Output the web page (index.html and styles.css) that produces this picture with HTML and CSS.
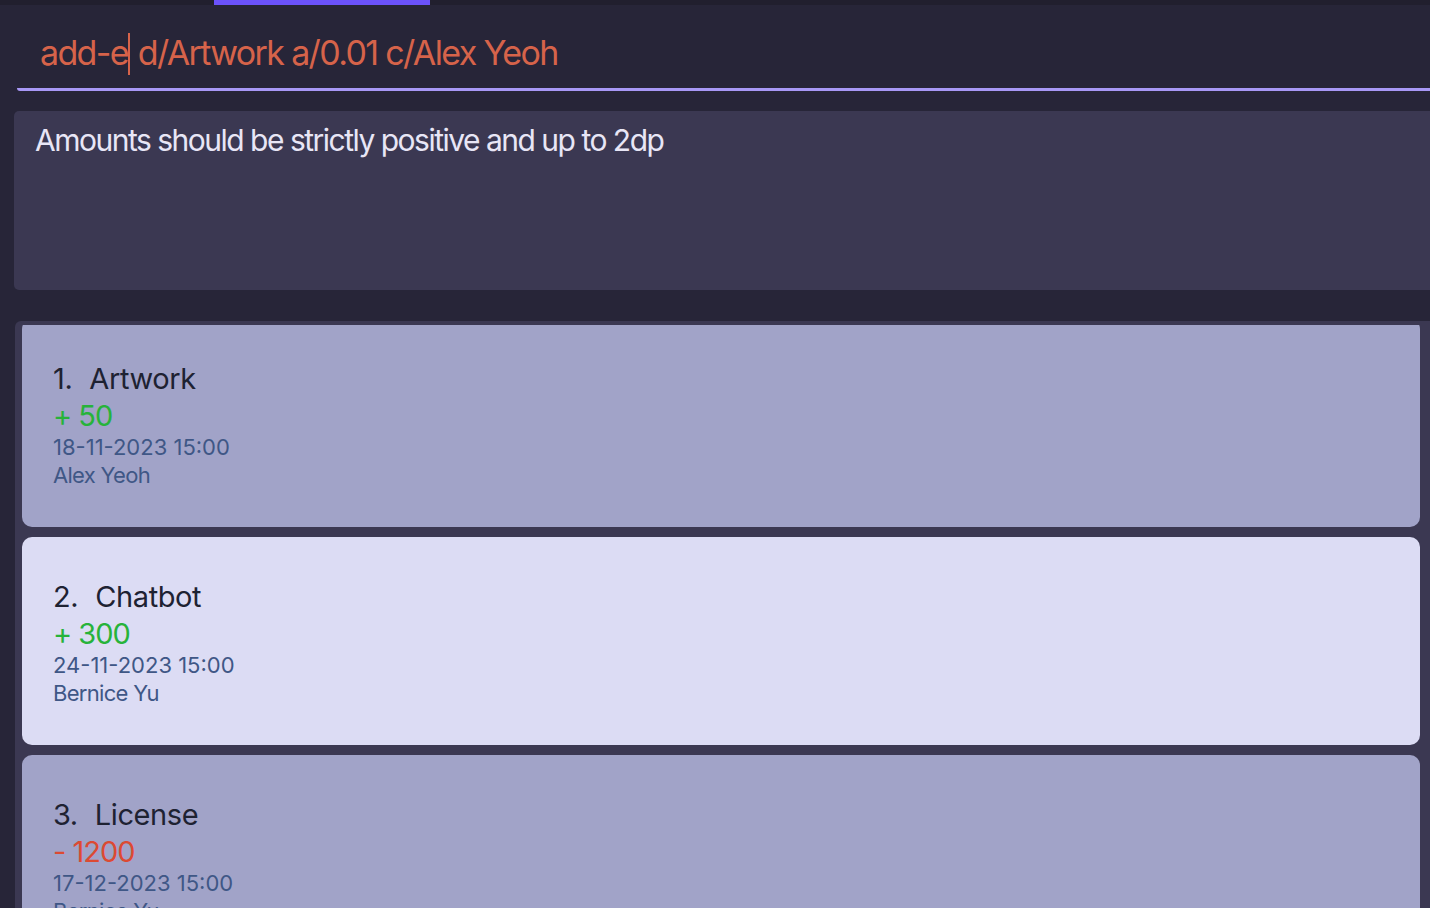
FILE: index.html
```html
<!DOCTYPE html>
<html lang="en">
<head>
<meta charset="utf-8">
<title>Finance</title>
<link rel="stylesheet" href="styles.css">
</head>
<body>
<div class="tabbar"><div class="tab-active"></div></div>
<div class="command">
  <div class="command-text">add-e<span class="caret"></span> d/Artwork a/0.01 c/Alex Yeoh</div>
</div>
<div class="result">Amounts should be strictly positive and up to 2dp</div>
<div class="list-panel">
  <div class="list-viewport">
    <div class="list-inner">
      <div class="card odd">
        <div class="title"><span class="idx">1.</span><span>Artwork</span></div>
        <div class="amount pos">+ 50</div>
        <div class="meta">18-11-2023 15:00</div>
        <div class="meta name">Alex Yeoh</div>
      </div>
      <div class="card even">
        <div class="title"><span class="idx">2.</span><span>Chatbot</span></div>
        <div class="amount pos">+ 300</div>
        <div class="meta">24-11-2023 15:00</div>
        <div class="meta name">Bernice Yu</div>
      </div>
      <div class="card odd">
        <div class="title"><span class="idx">3.</span><span>License</span></div>
        <div class="amount neg">- 1200</div>
        <div class="meta">17-12-2023 15:00</div>
        <div class="meta name">Bernice Yu</div>
      </div>
    </div>
  </div>
</div>
</body>
</html>
```
FILE: styles.css
```css
html, body {
  margin: 0;
  padding: 0;
}
body {
  width: 1430px;
  height: 908px;
  overflow: hidden;
  background: #272538;
  font-family: Inter, "Noto Sans", sans-serif;
}
.tabbar {
  height: 5px;
  background: #211f2e;
  display: flex;
}
.tab-active {
  margin-left: 214px;
  width: 216px;
  background: #6b52fb;
}
.command {
  margin-left: 17px;
  padding: 28px 0 13px 23px;
  border-bottom: 3px solid #a898f6;
  border-bottom-left-radius: 3px;
}
.command-text {
  font-size: 34px;
  line-height: 40px;
  color: #d6634a;
  white-space: pre;
  letter-spacing: -1.65px;
}
.caret {
  display: inline-block;
  width: 2px;
  height: 42px;
  background: #d6634a;
  vertical-align: -10px;
  margin-left: 0;
}
.result {
  margin-top: 20px;
  margin-left: 14px;
  height: 179px;
  box-sizing: border-box;
  padding: 11px 0 0 21px;
  background: #3b3852;
  border-radius: 5px 0 0 5px;
  color: #e8e6f6;
  font-size: 30px;
  line-height: 36px;
  letter-spacing: -1.5px;
}
.list-panel {
  margin-top: 31px;
  margin-left: 15px;
  background: #3b3852;
  border-radius: 6px 0 0 0;
  padding: 4px 10px 0 7px;
  height: 600px;
}
.list-viewport {
  overflow: hidden;
  height: 600px;
}
.list-inner {
  margin-top: -6px;
  display: flex;
  flex-direction: column;
  gap: 10px;
}
.card {
  height: 208px;
  box-sizing: border-box;
  border-radius: 10px;
  padding: 42px 0 0 31px;
}
.card.odd { background: #a1a3c8; }
.card.even { background: #dcdcf4; }
.title {
  display: flex;
  gap: 17px;
  font-size: 29px;
  line-height: 36px;
  color: #1e2232;
  letter-spacing: -0.4px;
}
.amount {
  font-size: 29px;
  line-height: 38px;
  letter-spacing: -1px;
}
.amount.pos { color: #27b33a; }
.amount.neg { color: #dc4a33; }
.meta {
  font-size: 22px;
  line-height: 24px;
  color: #3f5786;
  letter-spacing: 0;
}
.meta.name {
  margin-top: 4px;
  letter-spacing: -0.7px;
}
```
